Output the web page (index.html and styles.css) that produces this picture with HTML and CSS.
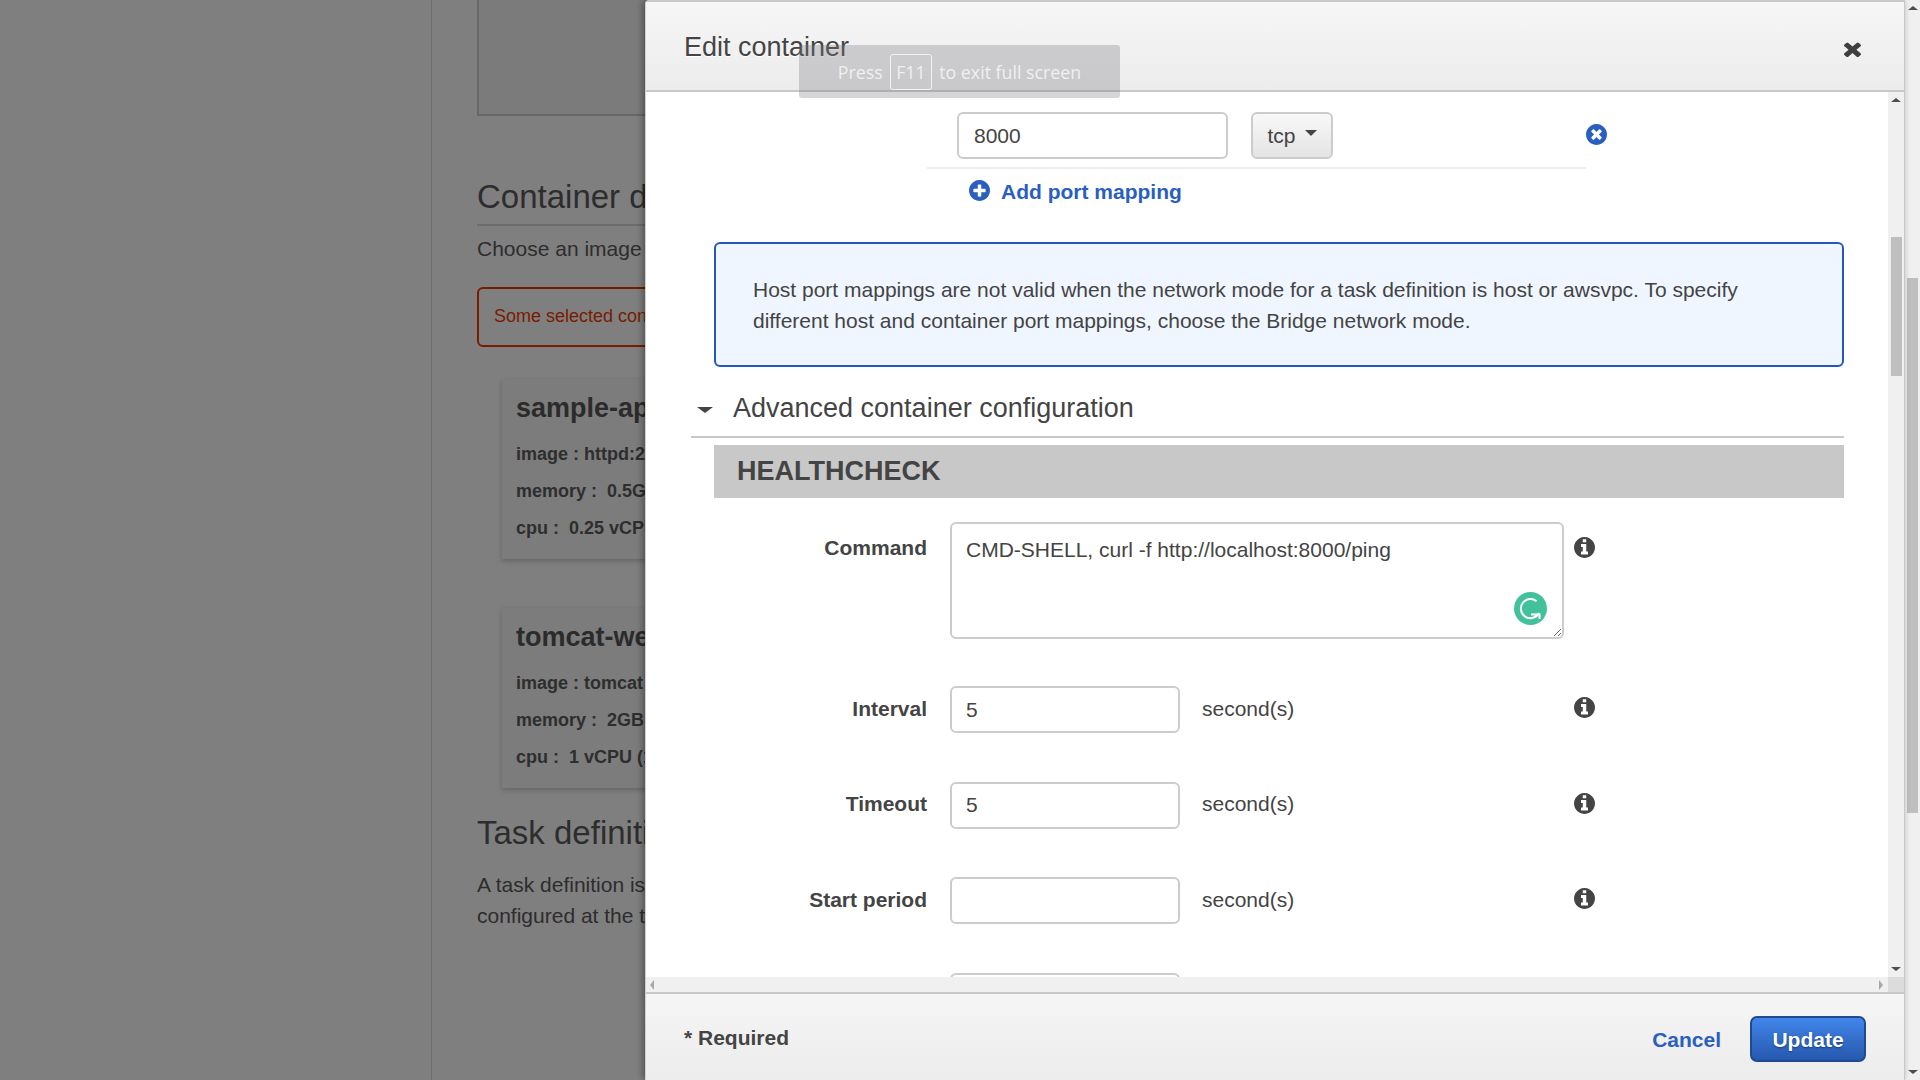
FILE: index.html
```html
<!DOCTYPE html>
<html lang="en">
<head>
<meta charset="utf-8">
<title>Edit container</title>
<link rel="stylesheet" href="styles.css">
</head>
<body>
<div class="screen">
  <div class="viewport">
    <aside class="sidebar"></aside>
    <main class="main">
      <div class="topbox"></div>
      <h2 class="h2 ruled">Container definitions</h2>
      <p class="para">Choose an image for</p>
      <div class="alert">Some selected containers</div>
      <section class="card card-first">
        <h3 class="card-title">sample-app</h3>
        <p class="card-line">image : httpd:2.4</p>
        <p class="card-line">memory :&nbsp; 0.5GB</p>
        <p class="card-line">cpu :&nbsp; 0.25 vCPU</p>
      </section>
      <section class="card card-second">
        <h3 class="card-title">tomcat-web</h3>
        <p class="card-line">image : tomcat</p>
        <p class="card-line">memory :&nbsp; 2GB</p>
        <p class="card-line">cpu :&nbsp; 1 vCPU (1)</p>
      </section>
      <h2 class="h2 task">Task definition</h2>
      <p class="para para-task">A task definition is<br>configured at the task</p>
    </main>
  </div>
  <div class="pagebar">
    <span class="arrow up"></span>
    <span class="page-thumb"></span>
    <span class="arrow down"></span>
  </div>
</div>

<div class="modal">
  <header class="modal-head">
    <h1 class="modal-title">Edit container</h1>
    <svg class="close" viewBox="302 238 1188 1316" preserveAspectRatio="none"><path d="M1490 1322q0 40-28 68l-136 136q-28 28-68 28t-68-28l-294-294-294 294q-28 28-68 28t-68-28l-136-136q-28-28-28-68t28-68l294-294-294-294q-28-28-28-68t28-68l136-136q28-28 68-28t68 28l294 294 294-294q28-28 68-28t68 28l136 136q28 28 28 68t-28 68l-294 294 294 294q28 28 28 68z"/></svg>
  </header>
  <div class="modal-mid">
    <div class="modal-body">
      <div class="port-wrap">
        <div class="port-row">
          <input class="input port-input" type="text" value="8000">
          <button class="tcp" type="button">tcp<span class="caret"></span></button>
        </div>
        <svg class="remove" viewBox="128 128 1536 1536"><path fill-rule="evenodd" d="M1277 1122q0-26-19-45l-181-181 181-181q19-19 19-45 0-27-19-46l-90-90q-19-19-46-19-26 0-45 19l-181 181-181-181q-19-19-45-19-27 0-46 19l-90 90q-19 19-19 46 0 26 19 45l181 181-181 181q-19 19-19 45 0 27 19 46l90 90q19 19 46 19 26 0 45-19l181-181 181 181q19 19 45 19 27 0 46-19l90-90q19-19 19-46zm387-226q0 209-103 385.5t-279.5 279.5-385.5 103-385.5-103-279.5-279.5-103-385.5 103-385.5 279.5-279.5 385.5-103 385.5 103 279.5 279.5 103 385.5z"/></svg>
      </div>
      <a class="add-port">
        <svg class="add-icon" viewBox="128 128 1536 1536"><path fill-rule="evenodd" d="M1344 960v-128q0-26-19-45t-45-19h-256v-256q0-26-19-45t-45-19h-128q-26 0-45 19t-19 45v256h-256q-26 0-45 19t-19 45v128q0 26 19 45t45 19h256v256q0 26 19 45t45 19h128q26 0 45-19t19-45v-256h256q26 0 45-19t19-45zm320-64q0 209-103 385.5t-279.5 279.5-385.5 103-385.5-103-279.5-279.5-103-385.5 103-385.5 279.5-279.5 385.5-103 385.5 103 279.5 279.5 103 385.5z"/></svg>
        <span>Add port mapping</span>
      </a>
      <div class="info-box">Host port mappings are not valid when the network mode for a task definition is host or awsvpc. To specify different host and container port mappings, choose the Bridge network mode.</div>
      <div class="advanced">
        <span class="adv-caret"></span>
        <span class="adv-title">Advanced container configuration</span>
      </div>
      <div class="health">HEALTHCHECK</div>

      <div class="form-row row-command">
        <label class="label label-top">Command</label>
        <div class="field field-area">
          <textarea class="area">CMD-SHELL, curl -f http://localhost:8000/ping</textarea>
          <svg class="grammarly" viewBox="0 0 33 33"><circle cx="16.5" cy="16.5" r="16.5" fill="#42c29a"/><path d="M22.6 9.2A9.6 9.6 0 1 0 25 21" fill="none" stroke="#fff" stroke-width="2"/><path d="M17 22.5H25.5V27" fill="none" stroke="#fff" stroke-width="2"/></svg>
        </div>
        <svg class="info info-top" viewBox="128 128 1536 1536"><use href="#info-shape"/></svg>
      </div>
      <div class="form-row">
        <label class="label">Interval</label>
        <div class="field"><input class="input short" type="text" value="5"><span class="unit">second(s)</span></div>
        <svg class="info" viewBox="128 128 1536 1536"><use href="#info-shape"/></svg>
      </div>
      <div class="form-row">
        <label class="label">Timeout</label>
        <div class="field"><input class="input short" type="text" value="5"><span class="unit">second(s)</span></div>
        <svg class="info" viewBox="128 128 1536 1536"><use href="#info-shape"/></svg>
      </div>
      <div class="form-row">
        <label class="label">Start period</label>
        <div class="field"><input class="input short" type="text" value=""><span class="unit">second(s)</span></div>
        <svg class="info" viewBox="128 128 1536 1536"><use href="#info-shape"/></svg>
      </div>
      <div class="form-row">
        <label class="label"></label>
        <div class="field"><input class="input short" type="text" value=""></div>
      </div>
    </div>
    <div class="vbar">
      <span class="arrow up"></span>
      <span class="v-thumb"></span>
      <span class="arrow down"></span>
    </div>
  </div>
  <div class="hbar">
    <div class="hbar-track">
      <span class="arrow left"></span>
      <span class="arrow right"></span>
    </div>
    <span class="corner"></span>
  </div>
  <footer class="modal-foot">
    <span class="required">* Required</span>
    <a class="cancel">Cancel</a>
    <button class="update" type="button">Update</button>
  </footer>
</div>

<div class="fs-toast">
  <span>Press</span><span class="key">F11</span><span>to exit full screen</span>
</div>

<svg class="defs" width="0" height="0"><defs><path id="info-shape" fill-rule="evenodd" d="M1152 1376v-160q0-14-9-23t-23-9h-96v-512q0-14-9-23t-23-9h-320q-14 0-23 9t-9 23v160q0 14 9 23t23 9h96v320h-96q-14 0-23 9t-9 23v160q0 14 9 23t23 9h448q14 0 23-9t9-23zm-128-896v-160q0-14-9-23t-23-9h-192q-14 0-23 9t-9 23v160q0 14 9 23t23 9h192q14 0 23-9t9-23zm640 416q0 209-103 385.5t-279.5 279.5-385.5 103-385.5-103-279.5-279.5-103-385.5 103-385.5 279.5-279.5 385.5-103 385.5 103 279.5 279.5 103 385.5z"/></defs></svg>
</body>
</html>
```
FILE: styles.css
```css
* { box-sizing: border-box; }
html, body { margin: 0; height: 100%; overflow: hidden; }
body { font-family: "Liberation Sans", Arial, sans-serif; font-size: 21px; color: #444; }

.screen { display: flex; height: 1080px; width: 1920px; }
.viewport { flex: 1; display: flex; overflow: hidden; background: #7f7f7f; }
.sidebar { width: 432px; flex: none; border-right: 1px solid #6e6e6e; }
.main { flex: 1; min-width: 0; padding-left: 45px; color: #2d2d2d; white-space: nowrap; }

.topbox { height: 116px; border: 2px solid #676767; border-top: 0; background: #7b7b7b; }
.h2 { margin: 0; font-size: 33px; font-weight: 400; line-height: 40px; }
.ruled { margin-top: 61px; padding-bottom: 7px; border-bottom: 2px solid #6b6b6b; }
.para { margin: 7px 0 0; font-size: 21px; line-height: 31px; color: #2d2d2d; }
.alert { margin-top: 23px; height: 60px; padding: 0 0 1px 15px; display: flex; align-items: center; border: 2px solid #781c00; border-radius: 6px; font-size: 18px; color: #781c00; }
.card { margin-left: 25px; height: 180px; padding: 13px 14px; background: #7c7c7c; box-shadow: 0 2px 5px rgba(0,0,0,.22); }
.card-first { margin-top: 32px; }
.card-second { margin-top: 49px; }
.card-title { margin: 0 0 12px; font-size: 27px; line-height: 32px; font-weight: 700; color: #2b2b2b; }
.card-line { margin: 0; font-size: 18px; line-height: 37px; font-weight: 700; color: #2e2e2e; }
.task { margin-top: 25px; }
.para-task { margin-top: 16px; }

.pagebar { width: 15px; flex: none; background: #f0f0f0; display: flex; flex-direction: column; align-items: center; padding: 6px 0; }
.page-thumb { width: 11px; height: 535px; margin-top: 268px; background: #bfbfbf; }
.pagebar .down { margin-top: auto; }

.arrow { display: block; width: 0; height: 0; flex: none; border-style: solid; border-color: transparent; }
.arrow.up { border-width: 0 5px 4px; border-bottom-color: #4e4e4e; }
.arrow.down { border-width: 4px 5px 0; border-top-color: #4e4e4e; }
.arrow.left { border-width: 5px 4px 5px 0; border-right-color: #a8a8a8; }
.arrow.right { border-width: 5px 0 5px 4px; border-left-color: #a8a8a8; }

.modal { position: absolute; left: 645px; top: 0; width: 1260px; height: 1080px; display: flex; flex-direction: column; background: #fff; border-top: 2px solid #c8c8c8; border-left: 1px solid #d0d0d0; border-right: 1px solid #c8c8c8; border-radius: 4px 0 0 0; box-shadow: -2px 0 7px rgba(0,0,0,.38); }
.modal-head { height: 90px; flex: none; display: flex; align-items: flex-start; justify-content: space-between; padding: 0 43px 0 38px; background: linear-gradient(#f6f6f6, #ececec); border-bottom: 2px solid #c8c8c8; }
.modal-title { margin: 29px 0 0; font-size: 27px; line-height: 32px; font-weight: 400; color: #444; text-shadow: 0 1px 0 #fff; }
.close { width: 17px; height: 16px; margin-top: 39px; fill: #3f3f3f; }

.modal-mid { flex: 1; min-height: 0; display: flex; }
.modal-body { flex: 1; min-width: 0; overflow: hidden; padding: 20px 44px 0 0; }
.vbar { width: 16px; flex: none; background: #f0f0f0; display: flex; flex-direction: column; align-items: center; padding: 6px 0; }
.v-thumb { width: 11px; height: 139px; margin-top: 135px; background: #bfbfbf; }
.vbar .down { margin-top: auto; }

.hbar { height: 15px; flex: none; display: flex; background: #f0f0f0; }
.hbar-track { flex: 1; display: flex; justify-content: space-between; align-items: center; padding: 0 5px 0 4px; }
.corner { width: 16px; background: #dcdcdc; }

.modal-foot { height: 88px; flex: none; display: flex; align-items: center; padding: 0 38px; background: linear-gradient(#f5f5f5, #ececec); border-top: 2px solid #c8c8c8; }
.required { font-weight: 700; color: #444; margin: 2px auto 0 0; }
.cancel { font-weight: 700; color: #2a5fbf; margin: 5px 29px 0 0; }
.update { width: 116px; height: 46px; margin-top: 4px; padding: 2px 0 0; border: 2px solid #1f4a90; border-radius: 7px; background: linear-gradient(#4086ea, #2758ae); color: #fff; font: 700 21px "Liberation Sans", Arial, sans-serif; text-shadow: 0 1px 2px #123a7c; }

.input { height: 47px; font: 21px "Liberation Sans", Arial, sans-serif; color: #444; background: #fff; border: 2px solid #ccc; border-radius: 6px; padding: 0 14px; outline: 0; }
.port-wrap { display: flex; align-items: flex-start; margin-left: 281px; }
.port-row { width: 659px; display: flex; gap: 23px; padding: 0 0 8px 30px; border-bottom: 2px solid #eee; }
.port-input { width: 271px; padding: 0 15px; }
.tcp { width: 82px; height: 47px; padding: 0; display: flex; align-items: center; justify-content: center; gap: 9px; border: 2px solid #ccc; border-radius: 6px; background: linear-gradient(#f8f8f8, #e4e4e4); font: 21px "Liberation Sans", Arial, sans-serif; color: #444; }
.caret { width: 0; height: 0; margin-top: -5px; border-style: solid; border-width: 6px 6px 0; border-color: #444 transparent transparent; }
.remove { width: 21px; height: 21px; margin-top: 12px; fill: #2a5fbf; }
.add-port { display: flex; align-items: flex-start; gap: 11px; margin: 11px 0 0 323px; color: #2a5fbf; font-weight: 700; font-size: 21px; line-height: 24px; }
.add-icon { width: 21px; height: 21px; fill: #2a5fbf; }
.info-box { margin: 38px 0 0 68px; padding: 30px 37px; border: 2px solid #2459bb; border-radius: 6px; background: #eff6ff; line-height: 31px; height: 125px; }
.advanced { margin: 0 0 0 45px; height: 71px; padding-top: 13px; display: flex; align-items: center; border-bottom: 2px solid #c8c8c8; }
.adv-caret { width: 0; height: 0; margin: 3px 20px 0 6px; border-style: solid; border-width: 6px 8px 0; border-color: #444 transparent transparent; }
.adv-title { font-size: 27px; color: #444; }
.health { margin: 7px 0 0 68px; height: 53px; padding-left: 23px; display: flex; align-items: center; background: #c8c8c8; font-size: 27px; font-weight: 700; color: #444; }

.form-row { display: flex; align-items: center; gap: 23px; margin-top: 48.5px; height: 47px; }
.row-command { margin-top: 24px; height: 117px; align-items: flex-start; }
.row-command + .form-row { margin-top: 47px; }
.label { width: 281px; flex: none; margin-top: -2px; text-align: right; font-weight: 700; color: #444; }
.label-top { margin-top: 14px; }
.field { position: relative; width: 614px; flex: none; display: flex; align-items: center; gap: 22px; }
.short { width: 230px; }
.unit { color: #444; margin-top: -2px; }
.area { display: block; width: 614px; height: 117px; padding: 14px 14px; font: 21px/24px "Liberation Sans", Arial, sans-serif; color: #444; border: 2px solid #ccc; border-radius: 6px; outline: 0; }
.grammarly { position: absolute; left: 564px; top: 70px; width: 33px; height: 33px; }
.info { width: 21px; height: 21px; flex: none; margin: -4px 0 0 -13px; fill: #444; }
.info-top { margin-top: 15px; }

.fs-toast { position: absolute; left: 799px; top: 45px; width: 321px; height: 53px; display: flex; align-items: center; justify-content: center; gap: 7px; background: rgba(120,120,125,.3); border-radius: 3px; color: rgba(255,255,255,.72); font: 17.8px "Open Sans", sans-serif; }
.key { height: 36px; padding: 0 5.5px; display: flex; align-items: center; border: 1px solid rgba(255,255,255,.75); border-radius: 3px; }
.defs { position: absolute; }
```
